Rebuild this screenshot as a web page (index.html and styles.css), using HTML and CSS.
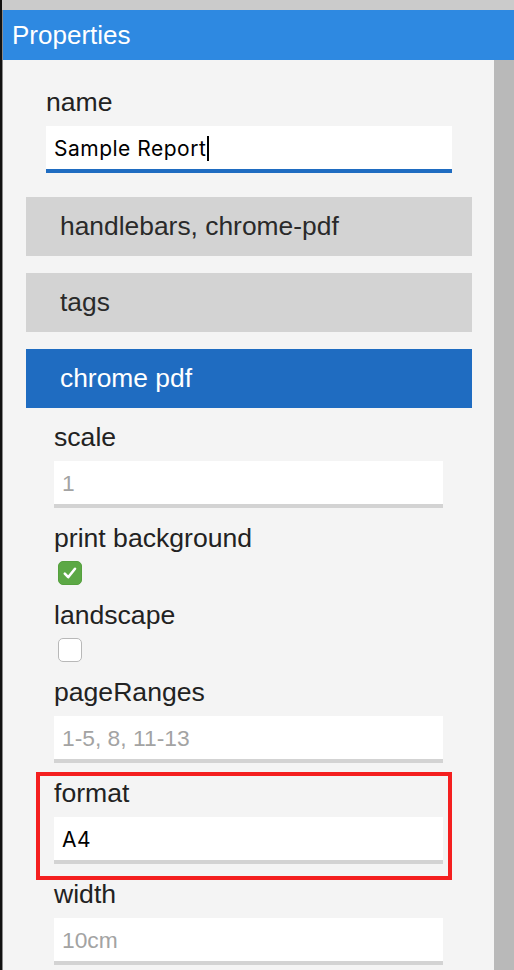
FILE: index.html
```html
<!DOCTYPE html>
<html>
<head>
  <title>Properties</title>
  <link rel="stylesheet" href="styles.css">
</head>
<body>
  <div class="app">
    <div class="top-bar"></div>
    <div class="panel-title">Properties</div>
    <div class="panel">
      <div class="panel-content">
        <div class="field name-field">
          <label>name</label>
          <div class="input active">Sample Report<span class="caret"></span></div>
        </div>

        <div class="sections">
          <div class="section">handlebars, chrome-pdf</div>
          <div class="section">tags</div>
          <div class="section selected">chrome pdf</div>
        </div>

        <div class="section-body">
          <div class="field">
            <label>scale</label>
            <div class="input placeholder">1</div>
          </div>

          <div class="field check-field">
            <label>print background</label>
            <span class="checkbox checked">
              <svg width="24" height="24" viewBox="0 0 24 24"><path d="M6.8 12.6l3.4 3.6 6.8-8.4" fill="none" stroke="#fff" stroke-width="2.6" stroke-linecap="round" stroke-linejoin="round"/></svg>
            </span>
          </div>

          <div class="field check-field">
            <label>landscape</label>
            <span class="checkbox"></span>
          </div>

          <div class="field">
            <label>pageRanges</label>
            <div class="input placeholder">1-5, 8, 11-13</div>
          </div>

          <div class="field highlight">
            <label>format</label>
            <div class="input">A4</div>
          </div>

          <div class="field">
            <label>width</label>
            <div class="input placeholder">10cm</div>
          </div>
        </div>
      </div>
      <div class="scrollbar"></div>
    </div>
  </div>
</body>
</html>
```

FILE: styles.css
```css
html, body {
  margin: 0;
  height: 100%;
}

body {
  font-family: "Liberation Sans", Arial, sans-serif;
  background: #cbcbcb;
  overflow: hidden;
}

.app {
  height: 100%;
  display: flex;
  flex-direction: column;
  border-left: 2px solid #111;
  box-shadow: inset 1px 0 0 #8a8a8a;
}

.top-bar {
  height: 10px;
  background: #cbcbcb;
}

.panel-title {
  height: 50px;
  line-height: 50px;
  padding-left: 9px;
  margin-left: 1px;
  font-size: 26px;
  color: #fff;
  background: #2e89e1;
}

.panel {
  flex: 1;
  display: flex;
  margin-left: 1px;
  background: #f4f4f4;
}

.panel-content {
  flex: 1;
  padding-top: 27px;
}

.scrollbar {
  width: 20px;
  background: #b9b9b9;
}

/* fields */

.field label {
  display: block;
  font-size: 26.6px;
  line-height: 30px;
  color: #222;
  margin-bottom: 9px;
}

.input {
  height: 43px;
  line-height: 45px;
  padding-left: 8px;
  background: #fff;
  border-bottom: 4px solid #d3d3d3;
  font-family: Inter, "Noto Sans", sans-serif;
  font-size: 21px;
  letter-spacing: 0.5px;
  color: #000;
}

.input.active {
  border-bottom-color: #1f6cc1;
}

.input.placeholder {
  font-family: "Liberation Sans", Arial, sans-serif;
  font-size: 22.8px;
  letter-spacing: 0;
  color: #a3a3a3;
}

.caret {
  display: inline-block;
  width: 2px;
  height: 25px;
  margin-left: 1px;
  vertical-align: -5px;
  background: #000;
}

.name-field {
  margin: 0 42px 0 43px;
}

/* sections */

.sections {
  display: flex;
  flex-direction: column;
  gap: 17px;
  margin: 24px 22px 0 23px;
}

.section {
  height: 59px;
  line-height: 59px;
  padding-left: 34px;
  font-size: 26.4px;
  color: #2a2a2a;
  background: #d3d3d3;
}

.section.selected {
  color: #fff;
  background: #1f6cc1;
}

.section-body {
  margin: 0 51px 0 51px;
  padding-top: 14px;
}

.section-body .field + .field {
  margin-top: 15px;
}

.check-field label {
  margin-bottom: 8px;
}

.checkbox {
  display: block;
  box-sizing: border-box;
  width: 24px;
  height: 24px;
  margin-left: 4px;
  border: 1px solid #b8b8b8;
  border-radius: 5px;
  background: #fff;
}

.checkbox svg {
  display: block;
  margin: -1px;
}

.checkbox.checked {
  border-color: #55a03e;
  background: #5ca845;
}

.highlight {
  position: relative;
}

.highlight::after {
  content: "";
  position: absolute;
  top: -6px;
  bottom: -16px;
  left: -18px;
  right: -9px;
  border: 4px solid #f41f1f;
}
```
